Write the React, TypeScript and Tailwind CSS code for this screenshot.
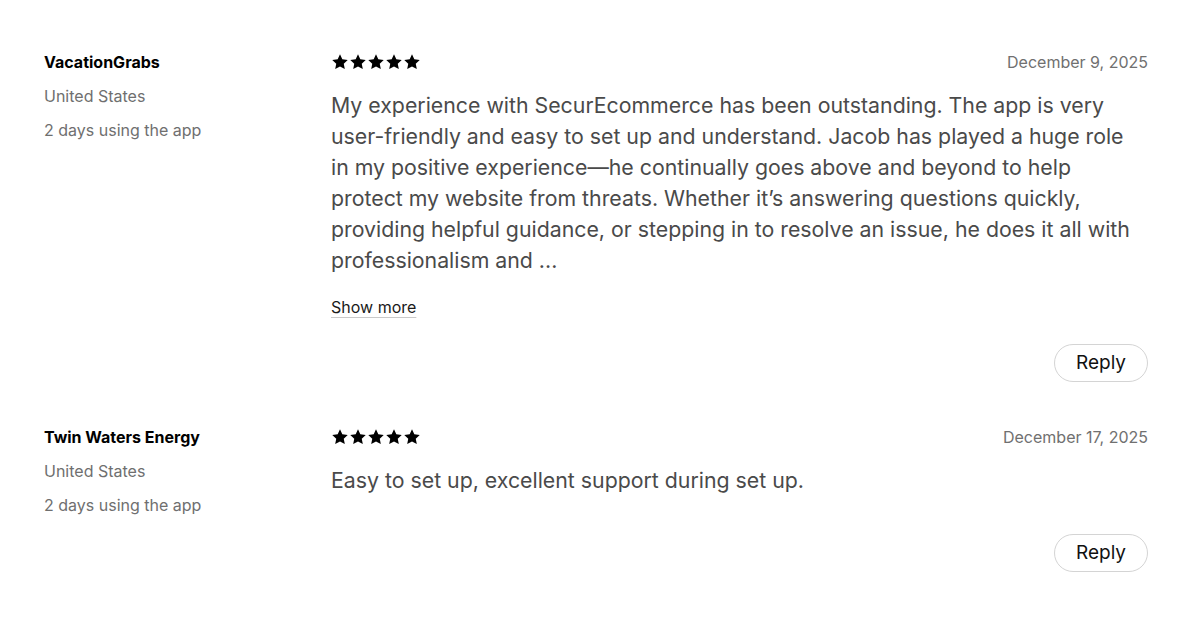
import React from 'react';

type Review = {
  name: string;
  country: string;
  usage: string;
  date: string;
  text: string;
  truncated?: boolean;
};

const reviews: Review[] = [
  {
    name: 'VacationGrabs',
    country: 'United States',
    usage: '2 days using the app',
    date: 'December 9, 2025',
    text: 'My experience with SecurEcommerce has been outstanding. The app is very user-friendly and easy to set up and understand. Jacob has played a huge role in my positive experience—he continually goes above and beyond to help protect my website from threats. Whether it’s answering questions quickly, providing helpful guidance, or stepping in to resolve an issue, he does it all with professionalism and ...',
    truncated: true,
  },
  {
    name: 'Twin Waters Energy',
    country: 'United States',
    usage: '2 days using the app',
    date: 'December 17, 2025',
    text: 'Easy to set up, excellent support during set up.',
  },
];

function Star() {
  return (
    <svg width="18" height="18" viewBox="0 0 24 24" fill="#000">
      <path d="M12 1.8l3.1 6.6 7.2.9-5.3 5 1.4 7.1L12 17.9l-6.4 3.5L7 14.3l-5.3-5 7.2-.9z" />
    </svg>
  );
}

function ReviewItem({ review }: { review: Review }) {
  return (
    <div className="flex">
      <div className="w-[287px] shrink-0">
        <div className="text-[16px] leading-6 font-bold text-black">{review.name}</div>
        <div className="mt-[10px] text-[16px] leading-6 text-[#6f6f6f]">{review.country}</div>
        <div className="mt-[10px] text-[16px] leading-6 text-[#6f6f6f]">{review.usage}</div>
      </div>
      <div className="flex-1 min-w-0">
        <div className="flex items-center justify-between h-6">
          <div className="flex items-center">
            <Star />
            <Star />
            <Star />
            <Star />
            <Star />
          </div>
          <div className="text-[16px] text-[#707070]">{review.date}</div>
        </div>
        <p className="mt-4 pr-3 text-[21.3px] leading-[31px] text-[#4a4a4a]">{review.text}</p>
        {review.truncated && (
          <button className="mt-[19px] block text-[16px] leading-6 text-[#1a1a1a] underline decoration-[#c9c9c9] underline-offset-4">
            Show more
          </button>
        )}
        <div className={`flex justify-end ${review.truncated ? 'mt-[25px]' : 'mt-[38px]'}`}>
          <button className="h-[38px] w-[94px] rounded-full border border-[#d4d4d4] text-[19px] text-[#111] bg-white">
            Reply
          </button>
        </div>
      </div>
    </div>
  );
}

export default function App() {
  return (
    <div
      className="w-[1200px] h-[637px] bg-white pl-[44px] pr-[52px] pt-[50px]"
      style={{ fontFamily: 'Inter, "Noto Sans", sans-serif' }}
    >
      <div className="flex flex-col gap-[43px]">
        {reviews.map((r, i) => (
          <ReviewItem key={i} review={r} />
        ))}
      </div>
    </div>
  );
}
